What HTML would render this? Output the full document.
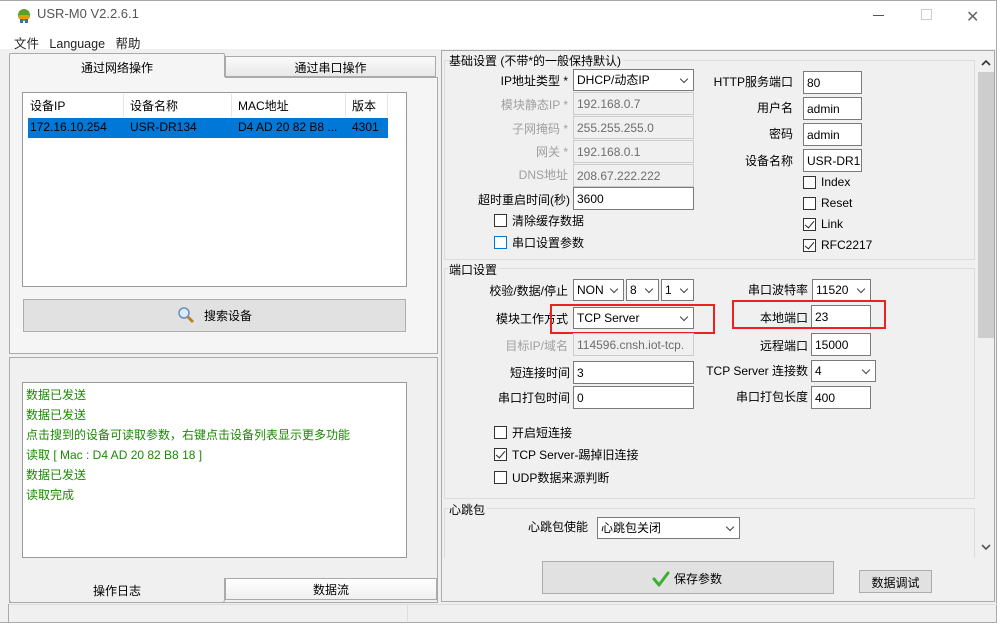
<!DOCTYPE html>
<html><head><meta charset="utf-8"><style>
*{box-sizing:border-box;margin:0;padding:0}
body{width:1004px;height:632px;position:relative;overflow:hidden;background:#fff;font-family:"Liberation Sans","Noto Sans CJK SC",sans-serif;font-size:12px;color:#000}
.a{position:absolute}
.in{position:absolute;background:#fff;border:1px solid #7a7a7a;height:23px;padding:4px 0 0 3px;font-size:12px;line-height:14px;white-space:nowrap;overflow:hidden}
.dis{background:#f0f0f0;border-color:#ccc;color:#6d6d6d}
.sel{position:absolute;background:#fff;border:1px solid #7a7a7a;height:22px;padding:3px 0 0 3px;line-height:14px;white-space:nowrap;overflow:hidden}
.sel:after{content:"";position:absolute;right:6px;top:6px;width:5px;height:5px;border-right:1px solid #444;border-bottom:1px solid #444;transform:rotate(45deg)}
.sel span{display:block;width:calc(100% - 18px);overflow:hidden}
.lb{position:absolute;text-align:right;white-space:nowrap}
.g{color:#a0a0a0}
.cb{position:absolute;width:13px;height:13px;border:1px solid #333;background:#fff}
.cb.c:after{content:"";position:absolute;left:3px;top:0px;width:4px;height:8px;border-right:1.3px solid #222;border-bottom:1.3px solid #222;transform:rotate(40deg)}
.ct{position:absolute;white-space:nowrap}
.grp{position:absolute;border:1px solid #dcdcdc}
.log div{height:20px;color:#1a8a00}
</style></head><body>
<div class="a" style="left:0;top:0;width:997px;height:623px;border-right:1px solid #aaa;border-bottom:1px solid #aaa;background:#f0f0f0"></div>
<div class="a" style="left:0;top:0;width:996px;height:49px;background:#fff"></div>
<div class="a" style="left:0;top:0;width:997px;height:1px;background:#aaa"></div>
<svg class="a" style="left:15px;top:8px" width="18" height="16"><circle cx="9" cy="7" r="6" fill="#5aa02c"/><rect x="4" y="7" width="10" height="4" fill="#e0a000"/><rect x="5" y="11" width="3" height="4" fill="#3b6fb0"/><rect x="10" y="11" width="3" height="4" fill="#3b6fb0"/></svg>
<div class="a" style="left:37px;top:6px;font-size:13px;color:#555">USR-M0 V2.2.6.1</div>
<div class="a" style="left:873px;top:15px;width:11px;height:1px;background:#555"></div>
<div class="a" style="left:921px;top:9px;width:11px;height:11px;border:1px solid #ccc"></div>
<div class="a" style="left:966px;top:7px;font-size:16px;color:#666">✕</div>
<div class="a" style="left:14px;top:33px;font-size:12.5px;color:#222">文件&nbsp;&nbsp;&nbsp;Language&nbsp;&nbsp;&nbsp;帮助</div>
<div class="a" style="left:9px;top:53px;width:216px;height:25px;border:1px solid #aaa;border-bottom:none;background:#f5f5f5;border-radius:2px 2px 0 0;text-align:center;padding-top:5px">通过网络操作</div>
<div class="a" style="left:225px;top:56px;width:211px;height:21px;border:1px solid #aaa;background:linear-gradient(#fafafa,#e8e8e8);text-align:center;padding-top:2px">通过串口操作</div>
<div class="a" style="left:9px;top:77px;width:429px;height:277px;border:1px solid #aaa;border-top:none;background:#f5f5f5"></div>
<div class="a" style="left:225px;top:77px;width:213px;height:1px;background:#aaa"></div>
<div class="a" style="left:22px;top:92px;width:385px;height:195px;border:1px solid #999;background:#fff"></div>
<div class="a" style="left:28px;top:118px;width:360px;height:20px;background:#0078d7"></div>
<div class="a" style="left:123px;top:94px;width:1px;height:23px;background:#e5e5e5"></div>
<div class="a" style="left:231px;top:94px;width:1px;height:23px;background:#e5e5e5"></div>
<div class="a" style="left:345px;top:94px;width:1px;height:23px;background:#e5e5e5"></div>
<div class="a" style="left:387px;top:94px;width:1px;height:23px;background:#e5e5e5"></div>
<div class="a" style="left:30px;top:97px">设备IP</div><div class="a" style="left:130px;top:97px">设备名称</div><div class="a" style="left:238px;top:97px">MAC地址</div><div class="a" style="left:352px;top:97px">版本</div>
<div class="a" style="left:30px;top:120px">172.16.10.254</div><div class="a" style="left:130px;top:120px">USR-DR134</div><div class="a" style="left:238px;top:120px">D4 AD 20 82 B8 ...</div><div class="a" style="left:352px;top:120px">4301</div>
<div class="a" style="left:23px;top:299px;width:383px;height:33px;border:1px solid #adadad;background:#e1e1e1"></div>
<svg class="a" style="left:177px;top:306px" width="18" height="18"><circle cx="7" cy="7" r="5" fill="#d8ecff" stroke="#6a8fb5" stroke-width="1.5"/><line x1="11" y1="11" x2="16" y2="16" stroke="#c08020" stroke-width="3"/></svg>
<div class="a" style="left:204px;top:307px">搜索设备</div>
<div class="a" style="left:9px;top:357px;width:429px;height:246px;border:1px solid #aaa;background:#f0f0f0"></div>
<div class="a log" style="left:22px;top:382px;width:385px;height:176px;border:1px solid #999;background:#fff;padding:3px 0 0 3px">
<div>数据已发送</div><div>数据已发送</div><div>点击搜到的设备可读取参数，右键点击设备列表显示更多功能</div><div>读取 [ Mac : D4 AD 20 82 B8 18 ]</div><div>数据已发送</div><div>读取完成</div></div>
<div class="a" style="left:9px;top:578px;width:216px;height:25px;border:1px solid #aaa;border-top:none;border-radius:0 0 3px 3px;background:#f0f0f0;text-align:center;padding-top:4px">操作日志</div>
<div class="a" style="left:225px;top:578px;width:212px;height:22px;border:1px solid #aaa;background:linear-gradient(#fff,#f0f0f0);text-align:center;padding-top:2px">数据流</div>
<div class="a" style="left:441px;top:50px;width:554px;height:552px;border:1px solid #aaa;background:#f0f0f0"></div>
<div class="a" style="left:978px;top:51px;width:16px;height:505px;background:#f0f0f0"></div>
<div class="a" style="left:978px;top:72px;width:16px;height:266px;background:#cdcdcd"></div>
<svg class="a" style="left:981px;top:59px" width="10" height="8"><path d="M1 6 L5 2 L9 6" fill="none" stroke="#333" stroke-width="1.6"/></svg>
<svg class="a" style="left:981px;top:543px" width="10" height="8"><path d="M1 2 L5 6 L9 2" fill="none" stroke="#555" stroke-width="1.6"/></svg>
<div class="grp" style="left:444px;top:60px;width:531px;height:200px"></div>
<div class="a" style="left:449px;top:52px;background:#f0f0f0;padding-right:2px">基础设置 (不带*的一般保持默认)</div>
<div class="lb" style="left:440px;width:128px;top:72px">IP地址类型 *</div>
<div class="sel" style="left:573px;top:69px;width:121px"><span>DHCP/动态IP</span></div>
<div class="lb g" style="left:440px;width:128px;top:96px">模块静态IP *</div><div class="in dis" style="left:573px;top:92px;width:121px">192.168.0.7</div>
<div class="lb g" style="left:440px;width:128px;top:120px">子网掩码 *</div><div class="in dis" style="left:573px;top:116px;width:121px">255.255.255.0</div>
<div class="lb g" style="left:440px;width:128px;top:143px">网关 *</div><div class="in dis" style="left:573px;top:140px;width:121px">192.168.0.1</div>
<div class="lb g" style="left:440px;width:128px;top:166px">DNS地址</div><div class="in dis" style="left:573px;top:164px;width:121px">208.67.222.222</div>
<div class="lb" style="left:440px;width:130px;top:191px">超时重启时间(秒)</div><div class="in" style="left:573px;top:187px;width:121px">3600</div>
<div class="cb" style="left:494px;top:214px"></div><div class="ct" style="left:512px;top:212px">清除缓存数据</div>
<div class="cb" style="left:494px;top:236px;border-color:#0078d7"></div><div class="ct" style="left:512px;top:234px">串口设置参数</div>
<div class="lb" style="left:690px;width:103px;top:73px">HTTP服务端口</div><div class="in" style="left:803px;top:71px;width:59px">80</div>
<div class="lb" style="left:690px;width:103px;top:99px">用户名</div><div class="in" style="left:803px;top:97px;width:59px">admin</div>
<div class="lb" style="left:690px;width:103px;top:125px">密码</div><div class="in" style="left:803px;top:123px;width:59px">admin</div>
<div class="lb" style="left:690px;width:103px;top:152px">设备名称</div><div class="in" style="left:803px;top:149px;width:59px">USR-DR1</div>
<div class="cb" style="left:803px;top:176px"></div><div class="ct" style="left:821px;top:175px">Index</div>
<div class="cb" style="left:803px;top:197px"></div><div class="ct" style="left:821px;top:196px">Reset</div>
<div class="cb c" style="left:803px;top:218px"></div><div class="ct" style="left:821px;top:217px">Link</div>
<div class="cb c" style="left:803px;top:239px"></div><div class="ct" style="left:821px;top:238px">RFC2217</div>
<div class="grp" style="left:444px;top:268px;width:531px;height:231px"></div>
<div class="a" style="left:449px;top:261px;background:#f0f0f0;padding-right:2px">端口设置</div>
<div class="lb" style="left:440px;width:128px;top:282px">校验/数据/停止</div>
<div class="sel" style="left:573px;top:279px;width:51px"><span>NON</span></div>
<div class="sel" style="left:626px;top:279px;width:33px"><span>8</span></div>
<div class="sel" style="left:661px;top:279px;width:33px"><span>1</span></div>
<div class="lb" style="left:700px;width:108px;top:281px">串口波特率</div>
<div class="sel" style="left:812px;top:279px;width:59px"><span>11520</span></div>
<div class="lb" style="left:440px;width:128px;top:310px">模块工作方式</div>
<div class="sel" style="left:573px;top:307px;width:121px"><span>TCP Server</span></div>
<div class="a" style="left:550px;top:304px;width:165px;height:30px;border:2px solid #f02020"></div>
<div class="lb" style="left:700px;width:108px;top:309px">本地端口</div>
<div class="in" style="left:811px;top:305px;width:60px">23</div>
<div class="a" style="left:732px;top:300px;width:154px;height:29px;border:2px solid #f02020"></div>
<div class="lb g" style="left:440px;width:128px;top:337px">目标IP/域名</div><div class="in dis" style="left:573px;top:333px;width:121px">114596.cnsh.iot-tcp.</div>
<div class="lb" style="left:700px;width:108px;top:337px">远程端口</div><div class="in" style="left:811px;top:333px;width:60px">15000</div>
<div class="lb" style="left:440px;width:130px;top:364px">短连接时间</div><div class="in" style="left:573px;top:361px;width:121px">3</div>
<div class="lb" style="left:690px;width:118px;top:362px">TCP Server 连接数</div><div class="sel" style="left:811px;top:360px;width:65px"><span>4</span></div>
<div class="lb" style="left:440px;width:130px;top:389px">串口打包时间</div><div class="in" style="left:573px;top:386px;width:121px">0</div>
<div class="lb" style="left:700px;width:108px;top:388px">串口打包长度</div><div class="in" style="left:811px;top:386px;width:60px">400</div>
<div class="cb" style="left:494px;top:426px"></div><div class="ct" style="left:512px;top:424px">开启短连接</div>
<div class="cb c" style="left:494px;top:448px"></div><div class="ct" style="left:512px;top:446px">TCP Server-踢掉旧连接</div>
<div class="cb" style="left:494px;top:471px"></div><div class="ct" style="left:512px;top:469px">UDP数据来源判断</div>
<div class="grp" style="left:444px;top:508px;width:531px;height:50px;border-bottom:none"></div>
<div class="a" style="left:449px;top:501px;background:#f0f0f0;padding-right:2px">心跳包</div>
<div class="lb" style="left:500px;width:88px;top:518px">心跳包使能</div>
<div class="sel" style="left:597px;top:517px;width:143px"><span>心跳包关闭</span></div>
<div class="a" style="left:542px;top:561px;width:292px;height:33px;border:1px solid #adadad;background:#e1e1e1"></div>
<svg class="a" style="left:652px;top:571px" width="18" height="16"><path d="M2 8 L7 14 L16 2" fill="none" stroke="#3cb030" stroke-width="3" stroke-linecap="round" stroke-linejoin="round"/></svg>
<div class="a" style="left:674px;top:570px">保存参数</div>
<div class="a" style="left:859px;top:570px;width:73px;height:23px;border:1px solid #adadad;background:#e1e1e1;text-align:center;padding-top:3px">数据调试</div>
<div class="a" style="left:8px;top:604px;width:989px;height:1px;background:#ddd"></div>
<div class="a" style="left:407px;top:605px;width:1px;height:16px;background:#ddd"></div>
<div class="a" style="left:8px;top:604px;width:1px;height:19px;background:#aaa"></div>
</body></html>
